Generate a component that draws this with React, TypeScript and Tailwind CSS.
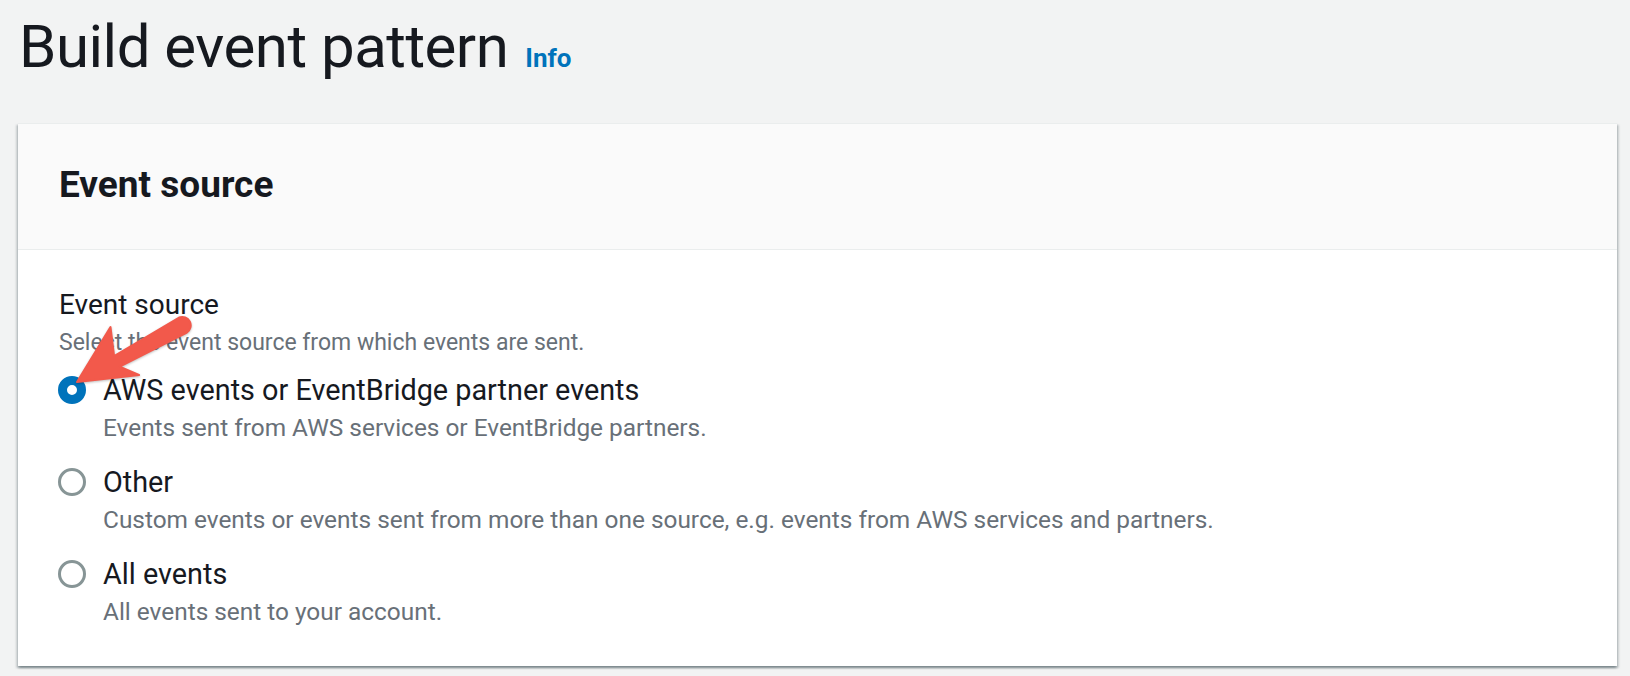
import React from "react";

type Option = { label: string; desc: string; checked?: boolean };

const options: Option[] = [
  {
    label: "AWS events or EventBridge partner events",
    desc: "Events sent from AWS services or EventBridge partners.",
    checked: true,
  },
  {
    label: "Other",
    desc: "Custom events or events sent from more than one source, e.g. events from AWS services and partners.",
  },
  { label: "All events", desc: "All events sent to your account." },
];

function Radio({ checked }: { checked?: boolean }) {
  if (checked) {
    return <span className="w-[28px] h-[28px] rounded-full border-[9px] border-[#0073bb] bg-white shrink-0" />;
  }
  return <span className="w-[28px] h-[28px] rounded-full border-[3px] border-[#879596] bg-white shrink-0" />;
}

export default function App() {
  return (
    <div className="relative min-h-[676px] bg-[#f2f3f3] pl-[18px] pr-[13px] font-['Roboto',sans-serif] text-[#16191f] overflow-hidden">
      {/* page title */}
      <div className="flex items-baseline gap-[17px] pt-[12px] pl-[1px]">
        <h1 className="text-[60px] leading-[70px] tracking-[-0.5px] font-normal">Build event pattern</h1>
        <a className="text-[26px] font-bold text-[#0073bb]">Info</a>
      </div>

      {/* container */}
      <div className="mt-[41px] bg-white border-t border-[#eaeded] shadow-[0_2px_2px_0_rgba(0,28,36,0.3),2px_2px_2px_0_rgba(0,28,36,0.15),-2px_2px_2px_0_rgba(0,28,36,0.15)]">
        <div className="bg-[#fafafa] border-b border-[#eaeded] px-[41px] pt-[39px] pb-[42px]">
          <h2 className="text-[37px] leading-[44px] font-bold">Event source</h2>
        </div>

        <div className="px-[41px] pt-[35px] pb-[36px]">
          <div className="text-[28px] leading-[40px]">Event source</div>
          <div className="text-[23px] leading-[36px] text-[#687078]">Select the event source from which events are sent.</div>

          <div className="mt-[9px] flex flex-col gap-[16px]">
            {options.map((o) => (
              <div key={o.label} className="flex flex-col">
                <div className="flex items-center gap-[17px] h-[40px] -ml-[1px]">
                  <Radio checked={o.checked} />
                  <span className="text-[28.8px] leading-[40px]">{o.label}</span>
                </div>
                <div className="pl-[44px] text-[24.4px] leading-[36px] text-[#687078]">{o.desc}</div>
              </div>
            ))}
          </div>
        </div>
      </div>

      {/* annotation arrow */}
      <svg
        className="absolute left-0 top-0 pointer-events-none drop-shadow-[0_1px_1px_rgba(0,0,0,0.25)]"
        width="1630"
        height="676"
        viewBox="0 0 1630 676"
      >
        <path
          d="M77 382 L110.5 327 L114.1 356 L179.1 317.5 A8.5 8.5 0 0 1 186.9 332.5 L119.7 366.6 L139 375 Z"
          fill="#f2594b"
          stroke="#f2594b"
          strokeWidth="2"
          strokeLinejoin="round"
        />
      </svg>
    </div>
  );
}
